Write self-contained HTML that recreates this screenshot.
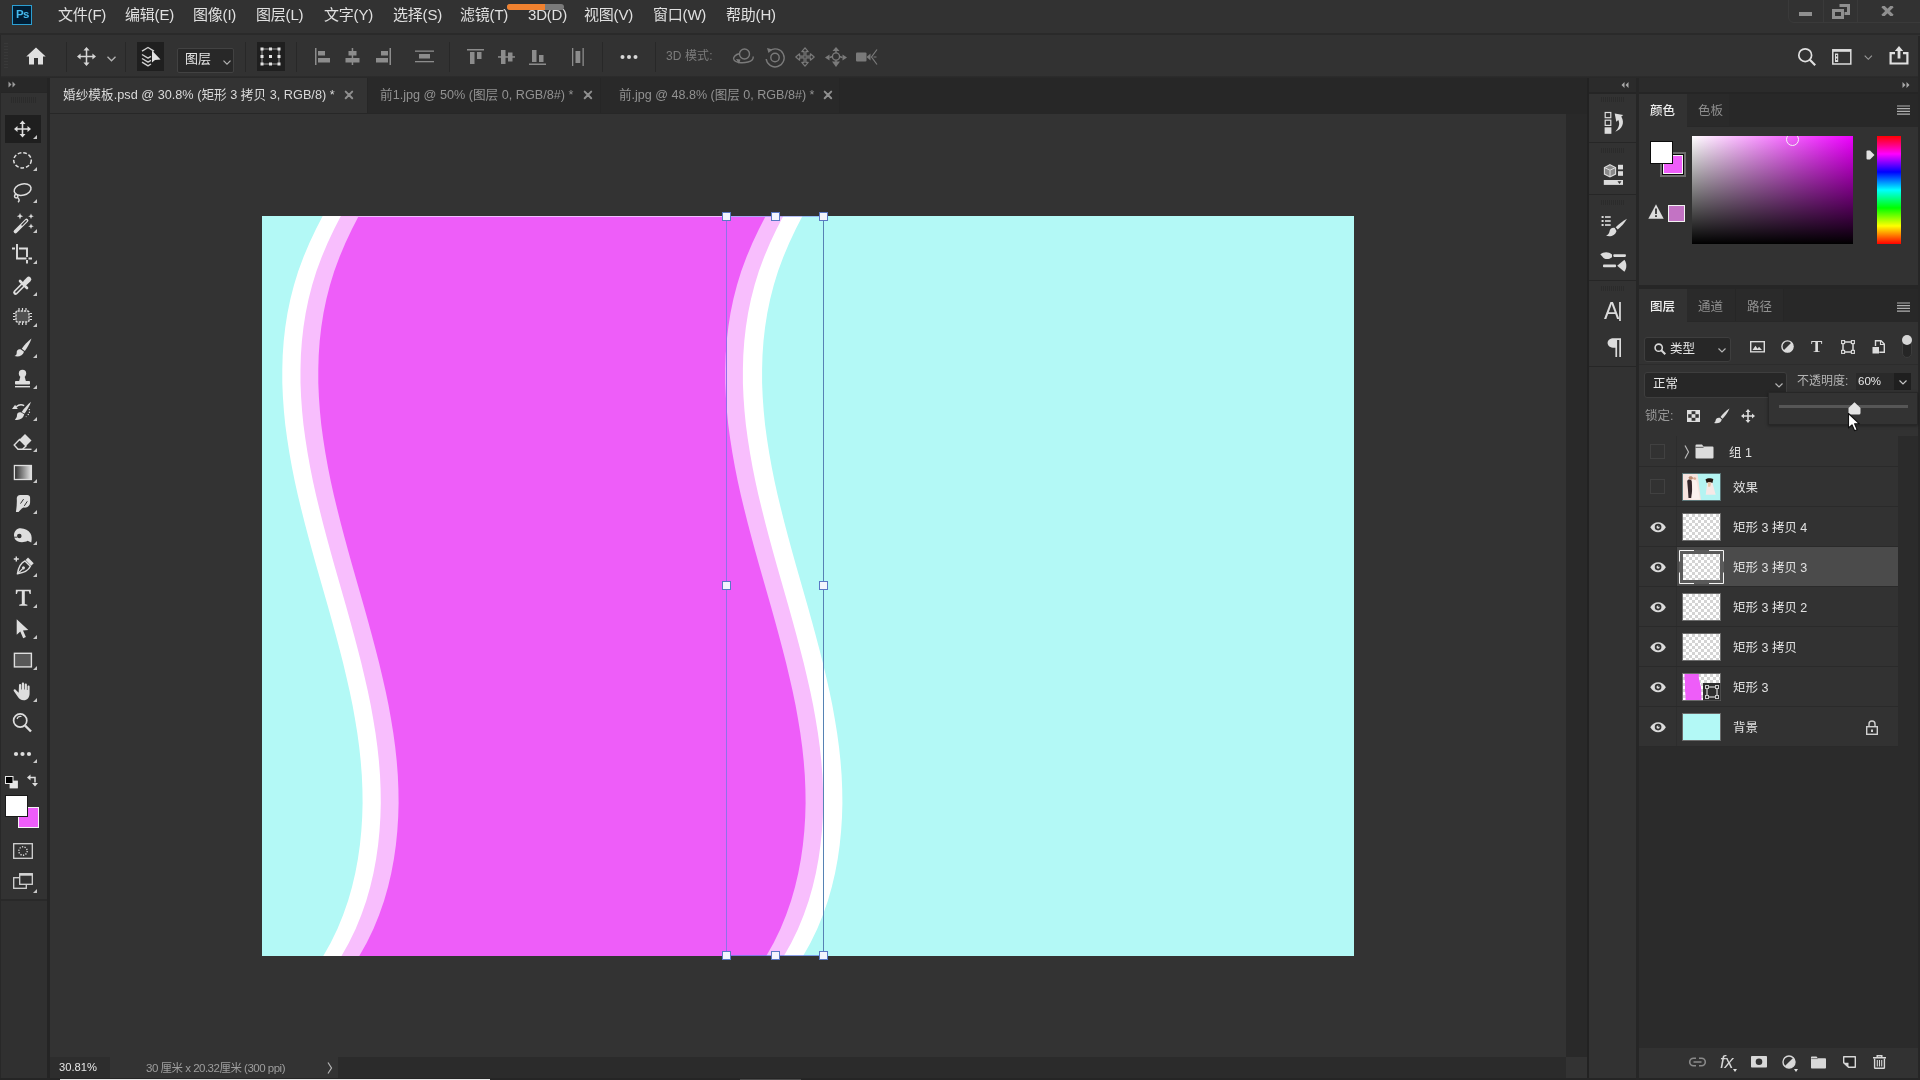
<!DOCTYPE html>
<html lang="zh-CN">
<head>
<meta charset="utf-8">
<title>婚纱模板.psd @ 30.8% (矩形 3 拷贝 3, RGB/8) *</title>
<style>
html,body{margin:0;padding:0;}
body{width:1920px;height:1080px;overflow:hidden;background:#323232;position:relative;
 font-family:"Liberation Sans","Noto Sans CJK SC",sans-serif;color:#dcdcdc;font-size:12px;}
.abs{position:absolute;display:block;}
.box{position:absolute;box-sizing:border-box;}
.t{position:absolute;white-space:nowrap;line-height:1;will-change:transform;}
svg{overflow:visible;}
.menu .t{font-size:15px;color:#e0e0e0;top:7px;letter-spacing:-0.2px;}
.tab{font-size:13px;top:89.200px;}
.ltxt{font-size:12px;color:#e2e2e2;left:1733px;}
.vsep{position:absolute;width:1px;background:#282828;top:42px;height:30px;}
.tri{position:absolute;width:0;height:0;border-left:4px solid transparent;border-bottom:4px solid #c8c8c8;}
.grip{position:absolute;height:5px;background:repeating-linear-gradient(90deg,#2b2b2b 0 1px,transparent 1px 2px);}
.rowline{position:absolute;left:1639px;width:259px;height:1px;background:#2a2a2a;}
.eye{position:absolute;left:1649.500px;width:16.200px;height:10.500px;margin-top:0.300px;}
.thumb{position:absolute;left:1682px;width:39px;height:28px;box-sizing:border-box;border:1px solid #6a6a6a;}
.chk{background-color:#fff;background-image:linear-gradient(45deg,#d4d4d4 25%,transparent 25%,transparent 75%,#d4d4d4 75%),linear-gradient(45deg,#d4d4d4 25%,transparent 25%,transparent 75%,#d4d4d4 75%);background-size:6px 6px;background-position:0 0,3px 3px;}
</style>
</head>
<body>
<!-- ===== menu bar ===== -->
<div class="box menu" style="left:0;top:0;width:1920px;height:34px;background:#323232;">
  <div class="box" style="left:12px;top:5px;width:20px;height:20px;background:#001d34;border:1.500px solid #2c9fd2;"></div>
  <div class="t" style="left:16px;top:9px;font-size:11.500px;font-weight:bold;color:#45baee;letter-spacing:-0.700px;">Ps</div>
  <div class="t" style="left:58px;">文件(F)</div>
  <div class="t" style="left:125px;">编辑(E)</div>
  <div class="t" style="left:193px;">图像(I)</div>
  <div class="t" style="left:256px;">图层(L)</div>
  <div class="t" style="left:324px;">文字(Y)</div>
  <div class="t" style="left:393px;">选择(S)</div>
  <div class="t" style="left:460px;">滤镜(T)</div>
  <div class="t" style="left:528px;">3D(D)</div>
  <div class="t" style="left:584px;">视图(V)</div>
  <div class="t" style="left:653px;">窗口(W)</div>
  <div class="t" style="left:726px;">帮助(H)</div>
  <!-- progress pill -->
  <div class="box" style="left:507px;top:4px;width:57px;height:6px;border-radius:3px;background:#7a7a7a;overflow:hidden;"><div style="width:38px;height:6px;background:#f0812f;"></div></div>
  <!-- window controls -->
  <div class="box" style="left:1788px;top:-6px;width:140px;height:29px;border:1px solid #3a3a3a;border-radius:6px;"></div>
  <div class="box" style="left:1823px;top:0;width:1px;height:22px;background:#3a3a3a;"></div>
  <div class="box" style="left:1857px;top:0;width:1px;height:22px;background:#3a3a3a;"></div>
  <div class="box" style="left:1799px;top:12px;width:13px;height:4px;background:#8f8f8f;"></div>
  <svg class="abs" style="left:1832px;top:4px" width="18" height="15" viewBox="0 0 18 15"><path d="M7.5 1.5h9v8h-4" fill="none" stroke="#8f8f8f" stroke-width="3"/><rect x="1.5" y="6.5" width="9" height="7" fill="none" stroke="#8f8f8f" stroke-width="3"/></svg>
  <svg class="abs" style="left:1881px;top:6px;overflow:hidden" width="13" height="10" viewBox="0 0 13 10"><path d="M1.5 0l10 10M11.500 0l-10 10" fill="none" stroke="#8f8f8f" stroke-width="3.2"/></svg>
</div>
<div class="box" style="left:0;top:33px;width:1920px;height:2px;background:#2a2a2a;"></div>
<!-- ===== options bar ===== -->
<div class="box" style="left:0;top:35px;width:1920px;height:41px;background:#323232;"></div>
<div class="box" style="left:0;top:76px;width:1920px;height:2px;background:linear-gradient(#2d2d2d,#282828);"></div>
<div class="box" style="left:0;top:35px;width:1px;height:43px;background:#282828;"></div>
<div class="box" style="left:4px;top:43px;width:4px;height:26px;background:repeating-linear-gradient(180deg,#393939 0 1px,transparent 1px 3px);"></div>
<!-- home -->
<svg class="abs" style="left:26px;top:47px" width="20" height="18" viewBox="0 0 20 18"><path d="M10 0.500L0.300 9.600h2.700V17.500h5V11h4v6.500h5V9.600h2.700z" fill="#e0e0e0"/></svg>
<div class="vsep" style="left:66px;"></div>
<!-- move tool preset -->
<svg class="abs" style="left:76.500px;top:47px" width="19" height="19" viewBox="0 0 20 20"><path d="M10 0l3.200 3.800h-2.400v5.400h5.400V6.800L20 10l-3.800 3.200v-2.400h-5.400v5.400h2.400L10 20l-3.200-3.800h2.400v-5.400H3.800v2.400L0 10l3.800-3.200v2.400h5.400V3.800H6.800z" fill="#d6d6d6"/></svg>
<svg class="abs" style="left:107px;top:56px" width="9" height="6" viewBox="0 0 9 6"><path d="M0.500 0.800l4 4 4-4" fill="none" stroke="#b4b4b4" stroke-width="1.300"/></svg>
<div class="vsep" style="left:125px;"></div>
<!-- auto select -->
<div class="box" style="left:137px;top:42px;width:27px;height:29px;background:#1f1f1f;"></div>
<svg class="abs" style="left:140px;top:46px" width="21" height="21" viewBox="0 0 21 21"><g fill="none" stroke="#cfcfcf" stroke-width="1.400" stroke-linejoin="round"><path d="M2 5.200L8 1.500l6 3.700"/><path d="M2 8.500l6 3.600 3-1.800"/><path d="M2 12.500l6 3.600 3-1.800"/><path d="M2 16.200l6 3.600 3-1.800"/></g><path d="M12 4.500v12l3-2.600 5.500-.4z" fill="#e2e2e2"/></svg>
<div class="box" style="left:176.500px;top:47.500px;width:57.500px;height:25.500px;background:#282828;border:1px solid #424242;border-radius:2px;"></div>
<div class="t" style="left:185px;top:52px;font-size:13px;color:#e6e6e6;">图层</div>
<svg class="abs" style="left:222.500px;top:59.500px" width="8" height="5" viewBox="0 0 8 5"><path d="M0.500 0.600l3.500 3.500 3.500-3.500" fill="none" stroke="#b4b4b4" stroke-width="1.200"/></svg>
<div class="vsep" style="left:245px;"></div>
<!-- show transform controls -->
<div class="box" style="left:257px;top:42px;width:28px;height:29px;background:#1f1f1f;"></div>
<svg class="abs" style="left:260px;top:47px" width="21" height="19" viewBox="0 0 21 19"><rect x="2" y="2" width="17" height="15" fill="none" stroke="#9a9a9a" stroke-width="1"/><g fill="#e4e4e4"><rect x="0.500" y="0.500" width="3" height="3"/><rect x="9" y="0.500" width="3" height="3"/><rect x="17.500" y="0.500" width="3" height="3"/><rect x="0.500" y="8" width="3" height="3"/><rect x="9" y="8" width="3" height="3"/><rect x="17.500" y="8" width="3" height="3"/><rect x="0.500" y="15.500" width="3" height="3"/><rect x="9" y="15.500" width="3" height="3"/><rect x="17.500" y="15.500" width="3" height="3"/></g></svg>
<div class="vsep" style="left:296px;"></div>
<!-- align icons (disabled grey) -->
<svg class="abs" style="left:315px;top:48px" width="16" height="17" viewBox="0 0 16 17"><g fill="#8c8c8c"><rect x="0" y="0" width="1.500" height="17"/><rect x="3" y="3" width="7" height="4.500"/><rect x="3" y="10" width="12" height="4.500"/></g></svg>
<svg class="abs" style="left:345px;top:48px" width="15" height="17" viewBox="0 0 15 17"><g fill="#8c8c8c"><rect x="6.700" y="0" width="1.500" height="17"/><rect x="3.500" y="3" width="8" height="4.500"/><rect x="0.500" y="10" width="14" height="4.500"/></g></svg>
<svg class="abs" style="left:375px;top:48px" width="16" height="17" viewBox="0 0 16 17"><g fill="#8c8c8c"><rect x="14.500" y="0" width="1.500" height="17"/><rect x="6" y="3" width="7" height="4.500"/><rect x="1" y="10" width="12" height="4.500"/></g></svg>
<svg class="abs" style="left:415px;top:50px" width="19" height="13" viewBox="0 0 19 13"><g fill="#8c8c8c"><rect x="0" y="0.500" width="19" height="1.300"/><rect x="0" y="11" width="19" height="1.300"/><rect x="4" y="4" width="11" height="4.500"/></g></svg>
<div class="vsep" style="left:449px;"></div>
<svg class="abs" style="left:467px;top:49px" width="17" height="16" viewBox="0 0 17 16"><g fill="#8c8c8c"><rect x="0" y="0" width="17" height="1.500"/><rect x="3" y="3" width="4.500" height="12"/><rect x="10" y="3" width="4.500" height="7"/></g></svg>
<svg class="abs" style="left:498px;top:49px" width="17" height="16" viewBox="0 0 17 16"><g fill="#8c8c8c"><rect x="0" y="7.200" width="17" height="1.500"/><rect x="3" y="1" width="4.500" height="14"/><rect x="10" y="3.500" width="4.500" height="9"/></g></svg>
<svg class="abs" style="left:529px;top:49px" width="17" height="16" viewBox="0 0 17 16"><g fill="#8c8c8c"><rect x="0" y="14.500" width="17" height="1.500"/><rect x="3" y="1" width="4.500" height="12"/><rect x="10" y="6" width="4.500" height="7"/></g></svg>
<svg class="abs" style="left:572px;top:48px" width="12" height="18" viewBox="0 0 12 18"><g fill="#8c8c8c"><rect x="0" y="0" width="1.300" height="18"/><rect x="10.500" y="0" width="1.300" height="18"/><rect x="3.500" y="3" width="4.800" height="12"/></g></svg>
<div class="vsep" style="left:602px;"></div>
<svg class="abs" style="left:620px;top:54px" width="18" height="6" viewBox="0 0 18 6"><g fill="#d8d8d8"><circle cx="2.500" cy="3" r="2"/><circle cx="9" cy="3" r="2"/><circle cx="15.500" cy="3" r="2"/></g></svg>
<div class="vsep" style="left:655px;"></div>
<div class="t" style="left:666px;top:50px;font-size:12px;color:#7c7c7c;letter-spacing:0.100px;">3D 模式:</div>
<!-- 3D mode icons (disabled) -->
<svg class="abs" style="left:732px;top:48px" width="23" height="18" viewBox="0 0 23 18"><g fill="none" stroke="#7a7a7a" stroke-width="1.400"><circle cx="12.500" cy="6" r="5"/><path d="M8 5.500C3 6.500 0.500 9.500 2 12c1.500 2.500 8 3.500 14 2 4-1 6-3.200 5-5.500"/></g><path d="M4 11l4.500 0.500-1.500 4.500z" fill="#7a7a7a"/></svg>
<svg class="abs" style="left:765px;top:47px" width="20" height="20" viewBox="0 0 20 20"><g fill="none" stroke="#7a7a7a" stroke-width="1.400"><circle cx="10" cy="10.500" r="4.200"/><path d="M5 3.500A9 9 0 1 1 1.200 12"/></g><path d="M2 1l5.500 1.500-4 3.500z" fill="#7a7a7a"/></svg>
<svg class="abs" style="left:795px;top:47px" width="20" height="20" viewBox="0 0 20 20"><path d="M10 0.800l3.200 3.800h-2.300v4.500h4.500V6.800L19.200 10l-3.800 3.200v-2.300h-4.500v4.500h2.300L10 19.200l-3.200-3.800h2.300v-4.500H4.600v2.300L0.800 10l3.800-3.200v2.300h4.500V4.600H6.800z" fill="none" stroke="#7a7a7a" stroke-width="1.200" stroke-linejoin="round"/></svg>
<svg class="abs" style="left:825px;top:47px" width="22" height="20" viewBox="0 0 22 20"><g fill="#7a7a7a"><path d="M11 0l3.500 4h-7z"/><path d="M11 20l-4-5.500h8z"/><path d="M0 10.500l4.500-3v6z"/><path d="M22 10.500l-4.500-3v6z"/></g><circle cx="11" cy="9.500" r="3.600" fill="none" stroke="#7a7a7a" stroke-width="1.400"/><path d="M11 4v2M11 13v2M4.500 10.500l3-1M17.500 10.500l-3-1" stroke="#7a7a7a" stroke-width="1.400"/></svg>
<svg class="abs" style="left:856px;top:49px" width="22" height="16" viewBox="0 0 22 16"><rect x="0" y="3.500" width="10.500" height="9" rx="1" fill="#7a7a7a"/><path d="M10.500 8l4-3.500v7z" fill="#7a7a7a"/><path d="M21 0.500L15.500 8l5.500 7.500M17.500 8h3" fill="none" stroke="#7a7a7a" stroke-width="1.200"/></svg>
<!-- right side: search / workspace / share -->
<svg class="abs" style="left:1797px;top:47px" width="20" height="20" viewBox="0 0 20 20"><circle cx="8.200" cy="8.200" r="6.400" fill="none" stroke="#e0e0e0" stroke-width="1.700"/><path d="M12.800 12.800l5.400 5.400" stroke="#e0e0e0" stroke-width="2.200"/></svg>
<svg class="abs" style="left:1832px;top:49px" width="20" height="16" viewBox="0 0 20 16"><rect x="0.800" y="0.800" width="18" height="14.200" fill="none" stroke="#dcdcdc" stroke-width="1.500"/><rect x="0.800" y="0.800" width="18" height="2" fill="#dcdcdc"/><rect x="3" y="4.500" width="3.200" height="8.500" fill="#dcdcdc"/><rect x="4" y="6" width="1.200" height="1.500" fill="#323232"/><rect x="4" y="9.500" width="1.200" height="1.500" fill="#323232"/></svg>
<svg class="abs" style="left:1864px;top:55px" width="9" height="6" viewBox="0 0 9 6"><path d="M0.700 0.700l3.600 3.600 3.600-3.600" fill="none" stroke="#9c9c9c" stroke-width="1.100"/></svg>
<svg class="abs" style="left:1889px;top:46px" width="20" height="19" viewBox="0 0 20 19"><path d="M6 7.200H1.600v10.300h16.800V7.200H14" fill="none" stroke="#e0e0e0" stroke-width="2.200"/><path d="M10 0l4.200 5h-2.800v7.500h-2.800V5H5.800z" fill="#e0e0e0"/></svg>
<!-- ===== left toolbar ===== -->
<div class="box" style="left:0;top:78px;width:47px;height:1002px;background:#303030;"></div>
<div class="box" style="left:0;top:78px;width:47px;height:822px;background:#323232;"></div>
<div class="box" style="left:0;top:78px;width:47px;height:14px;background:#282828;"></div>
<div class="box" style="left:0;top:92px;width:47px;height:1px;background:#262626;"></div>
<div class="box" style="left:0;top:899px;width:47px;height:2px;background:#292929;"></div>
<div class="box" style="left:47px;top:78px;width:3px;height:1002px;background:#242424;"></div>
<div class="box" style="left:0;top:78px;width:1px;height:1002px;background:#282828;"></div>
<svg class="abs" style="left:8px;top:81px" width="8" height="7" viewBox="0 0 8 7"><path d="M0.500 0.500l3 3-3 3zM4.500 0.500l3 3-3 3z" fill="#9c9c9c"/></svg>
<div class="grip" style="left:11px;top:97px;width:25px;height:6px;"></div>
<div class="box" style="left:5px;top:115px;width:36px;height:28px;background:#1f1f1f;"></div>
<svg class="abs" style="left:0;top:78px" width="48" height="822" viewBox="0 78 48 822">
<g fill="#dedede">
 <!-- 1 move -->
 <path transform="translate(22.500 129)" d="M0 -8.500l3 3.500h-2.200v4.200h4.200v-2.200l3.500 3-3.500 3v-2.200h-4.200v4.200h2.200l-3 3.500-3-3.500h2.200v-4.200h-4.200v2.200l-3.500-3 3.500-3v2.200h4.200v-4.200h-2.200z"/>
 <!-- 2 elliptical marquee -->
 <ellipse cx="22.500" cy="160.300" rx="8.800" ry="7.600" fill="none" stroke="#dedede" stroke-width="1.500" stroke-dasharray="3.700 1.900"/>
 <!-- 3 lasso -->
 <g transform="translate(22.500 192.500)" fill="none" stroke="#dedede" stroke-width="1.500"><ellipse cx="0.800" cy="-2.800" rx="8.600" ry="5.600" transform="rotate(-14)"/><circle cx="-6.300" cy="3.800" r="1.700"/><path d="M-5 5c2.200 1.500 2 3.500 0.500 4.800"/></g>
 <!-- 4 magic wand -->
 <g transform="translate(23.500 223)"><path d="M-8 8.500L3 -2.500" stroke="#dedede" stroke-width="3.800" stroke-linecap="round"/><path d="M-1.500 2L2.700 -2.200" stroke="#323232" stroke-width="1.400" stroke-linecap="round"/><path d="M-3.500 -10l0.900 2.300 2.300 0.900-2.300 0.900-0.900 2.300-0.900-2.300-2.300-0.900 2.300-0.900z"/><path d="M7.500 -9.500l0.800 2 2 0.800-2 0.800-0.800 2-0.800-2-2-0.800 2-0.800z"/><path d="M7.500 0.500l0.800 2 2 0.800-2 0.800-0.800 2-0.800-2-2-0.800 2-0.800z"/></g>
 <!-- 5 crop -->
 <g transform="translate(22 253.500)" fill="none" stroke="#dedede" stroke-width="1.900"><path d="M-5 -9.500v14.500h9.500M6.500 5h3.500"/><path d="M-10 -5h3M-3 -5h8v8.500M5 6.500v3.500"/></g>
 <!-- 6 eyedropper -->
 <g transform="translate(22.500 285.500)"><path d="M-7 7L1 -1" stroke="#dedede" stroke-width="4.600" stroke-linecap="round"/><path d="M-6.500 6.500L0.500 -0.500" stroke="#323232" stroke-width="1.700" stroke-linecap="round"/><path d="M-2.500 -4.500l7 7" stroke="#dedede" stroke-width="2.600" stroke-linecap="round"/><path d="M3 -3l3.200-3.200" stroke="#dedede" stroke-width="5.200" stroke-linecap="round"/></g>
 <!-- 7 patch -->
 <g transform="translate(22.500 316.500)"><rect x="-6.500" y="-5.500" width="13" height="11" rx="1.500" fill="#505050" stroke="#dedede" stroke-width="1.400" stroke-dasharray="2.200 1"/><path d="M-3.500 -6v-2.600M0 -6v-2.600M3.500 -6v-2.600M-3.500 6v2.600M0 6v2.600M3.500 6v2.600M-7 -3h-2.500M-7 0h-2.500M-7 3h-2.500M7 -3h2.500M7 0h2.500M7 3h2.500" stroke="#dedede" stroke-width="1.200"/></g>
 <!-- 8 brush -->
 <g transform="translate(23 347.500)"><path d="M8.500 -9C5 -6.500 1 -2 -1.200 1.200L1.800 3.600C4 0.500 7 -4.500 8.500 -9z"/><path d="M-2 2C-4.500 1 -6.500 2.800 -6.300 5.200C-6.200 7 -7.300 8 -8.500 8.600C-4.500 9.800 0 8.300 1 4.300z"/></g>
 <!-- 9 stamp -->
 <g transform="translate(22.500 378.500)"><circle cx="0" cy="-5" r="3.700"/><path d="M-2 -2.500h4l1.500 5.500h-7z"/><rect x="-7.500" y="2.500" width="15" height="3.600" rx="0.800"/><rect x="-7.500" y="7.500" width="15" height="1.400"/></g>
 <!-- 10 history brush -->
 <g transform="translate(22 411)"><path d="M9 -9.300C5.500 -6.500 2 -2.500 -0.300 1L2.600 2.500C5 -1 7.800 -5.500 9 -9.300z"/><path d="M-0.800 1.600C-3.200 0.800 -5 2.200 -5 4.300C-5 6.300 -6 7.800 -7.200 8.700C-3 9.500 1.200 8 2.200 3.300z"/><path d="M-5.800 -4.200C-3.500 -6.300 -0.500 -6.800 2.200 -5.400" fill="none" stroke="#dedede" stroke-width="1.300"/><path d="M-10 -2h5.800l-2.700-4.300z"/><circle cx="7.400" cy="-1.400" r="0.700"/><circle cx="7.400" cy="1.300" r="0.700"/><circle cx="6.300" cy="3.500" r="0.700"/><circle cx="4.200" cy="5.600" r="0.700" fill="#9a9a9a"/></g>
 <!-- 11 eraser -->
 <g transform="translate(22.500 442)"><path d="M2.500 -8L9 -1.500L3.500 4L-3 -2.500z"/><path d="M-3 -2.500L3.500 4L0 7.300h-4.500L-8.300 3z" fill="none" stroke="#dedede" stroke-width="1.400"/><path d="M0 7.300h9" stroke="#dedede" stroke-width="1.400"/></g>
 <!-- 12 gradient -->
 <rect x="14.400" y="465.500" width="17" height="14" fill="url(#gradtool)" stroke="#dedede" stroke-width="1.300"/>
 <!-- 13 smudge -->
 <g transform="translate(23.300 503.300)"><path d="M-7.400 8.600L-4.800 8.600C-3 6.500 -1.500 5 0.200 4.200C4 5 6.800 2.500 6.800 -1V-5.500C6.800 -7.500 5.500 -8.300 4 -8.300H-3C-5.500 -8.300 -6.800 -6.500 -6.500 -4C-6.300 0 -6.800 5 -7.400 8.600z"/><path d="M-2.800 0.300L0.300 -4.200M1 2.600L4 -2" fill="none" stroke="#323232" stroke-width="1"/></g>
 <!-- 14 sponge / burn hand -->
 <g transform="translate(23 535)"><path d="M-9 0.500C-9 -4 -6 -6.700 -2.500 -6.700C2 -6.700 5.500 -4.500 7.500 -1.500C8.800 0.500 9 4 8.300 7.400L4.500 5.800C2 7.500 -2.500 7.600 -5 6.500C-7.500 5.500 -9 3.500 -9 0.500z"/><circle cx="-3.700" cy="1" r="2.300" fill="#323232"/><path d="M-9.500 2.200h3.500" stroke="#323232" stroke-width="0.900"/></g>
 <!-- 15 pen + -->
 <g transform="translate(22.300 566.500)"><path d="M-8.500 -7.500h5M-6 -10v5" stroke="#dedede" stroke-width="1.400"/><g transform="rotate(45 1.500 1)"><path d="M-2.500 -9h8v3.500h-8z"/><path d="M-2.300 -4.500h7.600C7 0 5.500 4.500 1.500 10C-2.500 4.500 -4 0 -2.300 -4.500z" fill="none" stroke="#dedede" stroke-width="1.500" stroke-linejoin="round"/><path d="M1.500 9.500v-7" stroke="#dedede" stroke-width="1.200"/><circle cx="1.500" cy="1.500" r="1.500"/></g></g>
 <!-- 16 type -->
 <path transform="translate(23.300 597.700)" d="M-7.500 -8h15v4.200h-1.100l-0.900-2.600h-4v12.800l2.600 0.600v1h-8.200v-1l2.600-0.600v-12.800h-4l-0.900 2.600h-1.100z"/>
 <!-- 17 path selection -->
 <path transform="translate(22.500 628.700)" d="M-5.800 -9.500v15.500l3.600-3.300 2.900 6.800 2.700-1.200-2.900-6.600 5.300-0.300z"/>
 <!-- 18 rectangle -->
 <rect x="14.400" y="653.300" width="17" height="13.600" fill="#585858" stroke="#dedede" stroke-width="1.400"/>
 <!-- 19 hand -->
 <path transform="translate(22.500 691.500)" d="M-3.500 -6.500c0-1.500 2.200-1.500 2.200 0v4.500h0.600v-6c0-1.500 2.300-1.500 2.300 0v6h0.600v-5c0-1.500 2.200-1.500 2.200 0v5.500h0.600v-3.500c0-1.400 2.100-1.400 2.100 0v7c0 4-2.500 6.800-5.800 6.800c-3 0-4.500-1.300-6-3.500l-4-5.800c-0.800-1.200 0.800-2.300 1.800-1.300l3.100 3.100z"/>
 <!-- 20 zoom -->
 <g transform="translate(22.500 722.500)" fill="none" stroke="#dedede"><circle cx="-2.300" cy="-2" r="6.600" stroke-width="1.700"/><path d="M2.500 3l6 6" stroke-width="2.400"/><path d="M-5.500 -3.500A3.800 3.800 0 0 1 -1 -6" stroke-width="1.100"/></g>
 <!-- 21 more -->
 <circle cx="16" cy="754" r="2.100"/><circle cx="22.500" cy="754" r="2.100"/><circle cx="29" cy="754" r="2.100"/>
 <!-- default colours / swap -->
 <rect x="10" y="781" width="7.500" height="7" fill="#e6e6e6" stroke="#e6e6e6" stroke-width="0.800"/>
 <rect x="5.500" y="776.500" width="7.500" height="7" fill="#000" stroke="#e6e6e6" stroke-width="1"/>
 <g transform="translate(33 781)"><path d="M-3.500 -3.500h5.500v5" fill="none" stroke="#dedede" stroke-width="1.500"/><path d="M-6 -3.500l3.500-3v6z"/><path d="M2 5.500l-3-3.500h6z"/></g>
</g>
<defs><linearGradient id="gradtool" x1="0" x2="1" y1="0" y2="0"><stop offset="0" stop-color="#2c2c2c"/><stop offset="1" stop-color="#e4e4e4"/></linearGradient></defs>
</svg>
<!-- flyout triangles -->
<div class="tri" style="left:33px;top:135.3px"></div><div class="tri" style="left:33px;top:166.6px"></div><div class="tri" style="left:33px;top:198.8px"></div><div class="tri" style="left:33px;top:229.3px"></div><div class="tri" style="left:33px;top:259.8px"></div><div class="tri" style="left:33px;top:291.8px"></div><div class="tri" style="left:33px;top:322.8px"></div><div class="tri" style="left:33px;top:353.8px"></div><div class="tri" style="left:33px;top:384.8px"></div><div class="tri" style="left:33px;top:417.3px"></div><div class="tri" style="left:33px;top:448.3px"></div><div class="tri" style="left:33px;top:478.7px"></div><div class="tri" style="left:33px;top:509.6px"></div><div class="tri" style="left:33px;top:541.3px"></div><div class="tri" style="left:33px;top:572.8px"></div><div class="tri" style="left:33px;top:604.0px"></div><div class="tri" style="left:33px;top:635.0px"></div><div class="tri" style="left:33px;top:666.3px"></div><div class="tri" style="left:33px;top:697.8px"></div><div class="tri" style="left:33px;top:759px"></div><div class="tri" style="left:33px;top:889px"></div>
<!-- fg / bg swatches -->
<div class="box" style="left:18px;top:807px;width:21px;height:21px;background:#ee5df9;border:1px solid #f4f4f4;"></div>
<div class="box" style="left:5px;top:795px;width:23px;height:22px;background:#ffffff;border:1px solid #1a1a1a;"></div>
<!-- quick mask / screen mode -->
<svg class="abs" style="left:13px;top:843px" width="20" height="16" viewBox="0 0 20 16"><rect x="0.700" y="0.700" width="18.600" height="14.600" fill="none" stroke="#d4d4d4" stroke-width="1.300"/><circle cx="10" cy="8" r="4.200" fill="none" stroke="#d4d4d4" stroke-width="1.400" stroke-dasharray="1.300 1.300"/></svg>
<svg class="abs" style="left:13px;top:873px" width="20" height="16" viewBox="0 0 20 16"><rect x="0.700" y="4.700" width="12.600" height="10.600" fill="#323232" stroke="#d4d4d4" stroke-width="1.300"/><rect x="6.700" y="0.700" width="12.600" height="10.600" fill="#323232" stroke="#d4d4d4" stroke-width="1.300"/><rect x="6.700" y="0.700" width="12.600" height="2" fill="#d4d4d4"/></svg>
<!-- ===== document window ===== -->
<div class="box" style="left:50px;top:78px;width:1537px;height:36px;background:#272727;"></div>
<div class="box" style="left:50px;top:78px;width:317px;height:36px;background:#333333;"></div>
<div class="box" style="left:367px;top:78px;width:473px;height:35px;background:#292929;"></div>
<div class="box" style="left:367px;top:78px;width:1px;height:35px;background:#262626;"></div>
<div class="box" style="left:600px;top:78px;width:1px;height:35px;background:#262626;"></div>
<div class="box" style="left:839px;top:78px;width:1px;height:35px;background:#262626;"></div>
<div class="box" style="left:50px;top:113px;width:1537px;height:1px;background:#272727;"></div>
<div class="t tab" style="left:63px;color:#dadada;font-size:12.700px;">婚纱模板.psd @ 30.8% (矩形 3 拷贝 3, RGB/8) *</div>
<svg class="abs" style="left:344px;top:90px" width="10" height="10" viewBox="0 0 10 10"><path d="M1.700 1.600l6.500 6.600M8.200 1.600l-6.500 6.600" stroke="#8e8e8e" stroke-width="2" stroke-linecap="round"/></svg>
<div class="t tab" style="left:380px;color:#929292;font-size:12.650px;">前1.jpg @ 50% (图层 0, RGB/8#) *</div>
<svg class="abs" style="left:583px;top:90px" width="10" height="10" viewBox="0 0 10 10"><path d="M1.700 1.600l6.500 6.600M8.200 1.600l-6.500 6.600" stroke="#8e8e8e" stroke-width="2" stroke-linecap="round"/></svg>
<div class="t tab" style="left:619px;color:#929292;font-size:12.550px;">前.jpg @ 48.8% (图层 0, RGB/8#) *</div>
<svg class="abs" style="left:823px;top:90px" width="10" height="10" viewBox="0 0 10 10"><path d="M1.700 1.600l6.500 6.600M8.200 1.600l-6.500 6.600" stroke="#8e8e8e" stroke-width="2" stroke-linecap="round"/></svg>
<!-- pasteboard -->
<div class="box" style="left:50px;top:114px;width:1516px;height:943px;background:#333333;"></div>
<!-- scrollbars -->
<div class="box" style="left:1566px;top:114px;width:21px;height:943px;background:#292929;"></div>
<div class="box" style="left:50px;top:1057px;width:1516px;height:21px;background:#2b2b2b;"></div>
<div class="box" style="left:1566px;top:1057px;width:21px;height:21px;background:#333333;"></div>
<div class="box" style="left:1587px;top:78px;width:2px;height:1002px;background:#222222;"></div>
<!-- status bar -->
<div class="box" style="left:50px;top:1057px;width:60px;height:21px;background:#2d2d2d;"></div>
<div class="box" style="left:110px;top:1057px;width:228px;height:21px;background:#333333;"></div>
<div class="t" style="left:59px;top:1062px;font-size:11.200px;color:#e6e6e6;">30.81%</div>
<div class="t" style="left:146px;top:1063px;font-size:11.500px;color:#9e9e9e;letter-spacing:-0.500px;">30 厘米 x 20.32厘米 (300 ppi)</div>
<svg class="abs" style="left:327px;top:1062px" width="6" height="12" viewBox="0 0 6 12"><path d="M1 0.500l3.500 5.500L1 11.500" fill="none" stroke="#b4b4b4" stroke-width="1.200"/></svg>
<div class="box" style="left:0;top:1078px;width:1920px;height:2px;background:#252525;"></div>
<div class="box" style="left:60px;top:1079px;width:430px;height:1px;background:#e8e8e8;"></div>
<div class="box" style="left:740px;top:1079px;width:61px;height:1px;background:#4c4c4c;"></div>
<!-- canvas artwork -->
<svg class="abs" style="left:262px;top:216px;overflow:hidden" width="1092" height="740" viewBox="262 216 1092 740">
<rect x="262" y="216" width="1092" height="740" fill="#b3f9f6"/>
<polygon fill="#ffffff" points="323.2,215.0 316.0,229.0 309.4,243.0 303.5,257.0 298.3,271.0 294.0,285.0 290.4,299.0 287.5,313.0 285.3,327.0 283.7,341.0 282.7,355.0 282.3,369.0 282.3,383.0 282.9,397.0 283.9,411.0 285.3,425.0 287.2,439.0 289.4,453.0 291.9,467.0 294.7,481.0 297.8,495.0 301.2,509.0 304.7,523.0 308.4,537.0 312.2,551.0 316.1,565.0 320.1,579.0 324.1,593.0 328.1,607.0 332.0,621.0 335.8,635.0 339.5,649.0 343.1,663.0 346.4,677.0 349.6,691.0 352.5,705.0 355.0,719.0 357.3,733.0 359.2,747.0 360.7,761.0 361.8,775.0 362.4,789.0 362.6,803.0 362.2,817.0 361.3,831.0 359.9,845.0 357.9,859.0 355.3,873.0 352.0,887.0 348.0,901.0 343.1,915.0 337.4,929.0 330.6,943.0 322.7,957.0 802.5,957.0 810.4,943.0 817.2,929.0 822.9,915.0 827.8,901.0 831.8,887.0 835.1,873.0 837.7,859.0 839.7,845.0 841.1,831.0 842.0,817.0 842.4,803.0 842.2,789.0 841.6,775.0 840.5,761.0 839.0,747.0 837.1,733.0 834.8,719.0 832.3,705.0 829.4,691.0 826.2,677.0 822.9,663.0 819.3,649.0 815.6,635.0 811.8,621.0 807.9,607.0 803.9,593.0 799.9,579.0 795.9,565.0 792.0,551.0 788.2,537.0 784.5,523.0 781.0,509.0 777.6,495.0 774.5,481.0 771.7,467.0 769.2,453.0 767.0,439.0 765.1,425.0 763.7,411.0 762.7,397.0 762.1,383.0 762.1,369.0 762.5,355.0 763.5,341.0 765.1,327.0 767.3,313.0 770.2,299.0 773.8,285.0 778.1,271.0 783.3,257.0 789.2,243.0 795.8,229.0 803.0,215.0"/>
<polygon fill="#f8befd" points="341.4,215.0 334.2,229.0 327.6,243.0 321.7,257.0 316.5,271.0 312.2,285.0 308.6,299.0 305.7,313.0 303.5,327.0 301.9,341.0 300.9,355.0 300.5,369.0 300.5,383.0 301.1,397.0 302.1,411.0 303.5,425.0 305.4,439.0 307.6,453.0 310.1,467.0 312.9,481.0 316.0,495.0 319.4,509.0 322.9,523.0 326.6,537.0 330.4,551.0 334.3,565.0 338.3,579.0 342.3,593.0 346.3,607.0 350.2,621.0 354.0,635.0 357.7,649.0 361.3,663.0 364.6,677.0 367.8,691.0 370.7,705.0 373.2,719.0 375.5,733.0 377.4,747.0 378.9,761.0 380.0,775.0 380.6,789.0 380.8,803.0 380.4,817.0 379.5,831.0 378.1,845.0 376.1,859.0 373.5,873.0 370.2,887.0 366.2,901.0 361.3,915.0 355.6,929.0 348.8,943.0 340.9,957.0 783.3,957.0 791.2,943.0 798.0,929.0 803.7,915.0 808.6,901.0 812.6,887.0 815.9,873.0 818.5,859.0 820.5,845.0 821.9,831.0 822.8,817.0 823.2,803.0 823.0,789.0 822.4,775.0 821.3,761.0 819.8,747.0 817.9,733.0 815.6,719.0 813.1,705.0 810.2,691.0 807.0,677.0 803.7,663.0 800.1,649.0 796.4,635.0 792.6,621.0 788.7,607.0 784.7,593.0 780.7,579.0 776.7,565.0 772.8,551.0 769.0,537.0 765.3,523.0 761.8,509.0 758.4,495.0 755.3,481.0 752.5,467.0 750.0,453.0 747.8,439.0 745.9,425.0 744.5,411.0 743.5,397.0 742.9,383.0 742.9,369.0 743.3,355.0 744.3,341.0 745.9,327.0 748.1,313.0 751.0,299.0 754.6,285.0 758.9,271.0 764.1,257.0 770.0,243.0 776.6,229.0 783.8,215.0"/>
<polygon fill="#ee5df9" points="359.2,215.0 352.0,229.0 345.4,243.0 339.5,257.0 334.3,271.0 330.0,285.0 326.4,299.0 323.5,313.0 321.3,327.0 319.7,341.0 318.7,355.0 318.3,369.0 318.3,383.0 318.9,397.0 319.9,411.0 321.3,425.0 323.2,439.0 325.4,453.0 327.9,467.0 330.7,481.0 333.8,495.0 337.2,509.0 340.7,523.0 344.4,537.0 348.2,551.0 352.1,565.0 356.1,579.0 360.1,593.0 364.1,607.0 368.0,621.0 371.8,635.0 375.5,649.0 379.1,663.0 382.4,677.0 385.6,691.0 388.5,705.0 391.0,719.0 393.3,733.0 395.2,747.0 396.7,761.0 397.8,775.0 398.4,789.0 398.6,803.0 398.2,817.0 397.3,831.0 395.9,845.0 393.9,859.0 391.3,873.0 388.0,887.0 384.0,901.0 379.1,915.0 373.4,929.0 366.6,943.0 358.7,957.0 765.7,957.0 773.6,943.0 780.4,929.0 786.1,915.0 791.0,901.0 795.0,887.0 798.3,873.0 800.9,859.0 802.9,845.0 804.3,831.0 805.2,817.0 805.6,803.0 805.4,789.0 804.8,775.0 803.7,761.0 802.2,747.0 800.3,733.0 798.0,719.0 795.5,705.0 792.6,691.0 789.4,677.0 786.1,663.0 782.5,649.0 778.8,635.0 775.0,621.0 771.1,607.0 767.1,593.0 763.1,579.0 759.1,565.0 755.2,551.0 751.4,537.0 747.7,523.0 744.2,509.0 740.8,495.0 737.7,481.0 734.9,467.0 732.4,453.0 730.2,439.0 728.3,425.0 726.9,411.0 725.9,397.0 725.3,383.0 725.3,369.0 725.7,355.0 726.7,341.0 728.3,327.0 730.5,313.0 733.4,299.0 737.0,285.0 741.3,271.0 746.5,257.0 752.4,243.0 759.0,229.0 766.2,215.0"/>
<rect x="356" y="216" width="410" height="1" fill="#f1bdfd"/>
</svg>
<!-- transform bounding box -->
<div class="box" style="left:726px;top:216px;width:1px;height:740px;background:#9070ea;"></div>
<div class="box" style="left:823px;top:216px;width:1px;height:740px;background:#5682b4;"></div>
<div class="box" style="left:726px;top:216px;width:98px;height:1px;background:rgba(120,140,240,0.55);"></div>
<div class="box" style="left:726px;top:955px;width:98px;height:1px;background:rgba(90,120,220,0.7);"></div>
<div class="box hd" style="left:722px;top:212px;"></div><div class="box hd" style="left:771px;top:212px;"></div><div class="box hd" style="left:819px;top:212px;"></div>
<div class="box hd" style="left:722px;top:581px;"></div><div class="box hd" style="left:819px;top:581px;"></div>
<div class="box hd" style="left:722px;top:951px;"></div><div class="box hd" style="left:771px;top:951px;"></div><div class="box hd" style="left:819px;top:951px;"></div>
<style>.hd{width:9px;height:9px;background:#f3f5fd;border:1px solid #5a78c4;}</style>
<!-- ===== collapsed panel icon strip ===== -->
<div class="box" style="left:1589px;top:78px;width:47px;height:1000px;background:#323232;"></div>
<div class="box" style="left:1589px;top:78px;width:331px;height:14px;background:#2b2b2b;"></div>
<div class="box" style="left:1589px;top:92px;width:331px;height:2px;background:#252525;"></div>
<div class="box" style="left:1636px;top:78px;width:3px;height:1002px;background:#262626;"></div>
<svg class="abs" style="left:1621px;top:82px" width="8" height="6" viewBox="0 0 8 6"><path d="M3.500 0L0.500 3l3 3zM7.500 0L4.500 3l3 3z" fill="#a8a8a8"/></svg>
<svg class="abs" style="left:1902px;top:82px" width="8" height="6" viewBox="0 0 8 6"><path d="M0.500 0l3 3-3 3zM4.500 0l3 3-3 3z" fill="#a8a8a8"/></svg>
<div class="grip" style="left:1601px;top:97px;width:24px;"></div>
<div class="grip" style="left:1601px;top:148px;width:24px;"></div>
<div class="grip" style="left:1601px;top:200px;width:24px;"></div>
<div class="grip" style="left:1601px;top:286px;width:24px;"></div>
<div class="box" style="left:1589px;top:142px;width:47px;height:1px;background:#262626;"></div>
<div class="box" style="left:1589px;top:194px;width:47px;height:1px;background:#262626;"></div>
<div class="box" style="left:1589px;top:280px;width:47px;height:1px;background:#262626;"></div>
<div class="box" style="left:1589px;top:366px;width:47px;height:1px;background:#262626;"></div>
<svg class="abs" style="left:1589px;top:94px" width="47" height="280" viewBox="1589 94 47 280">
<g fill="#dcdcdc">
 <!-- history -->
 <rect x="1605.200" y="112.500" width="5.600" height="5.200" fill="none" stroke="#dcdcdc" stroke-width="1.200"/>
 <rect x="1605.200" y="120.200" width="5.600" height="5.200" fill="none" stroke="#dcdcdc" stroke-width="1.200"/>
 <rect x="1604.600" y="127.300" width="6.800" height="6.500"/>
 <path d="M1615.300 131.800c6.800-2.800 9.800-8.800 6-15.300l2-1.600-8.600-1.300 1.600 8.200 2-1.700c2 4.200 0.400 8.200-3 11.700z"/>
 <!-- 3D -->
 <path d="M1610 164.700l5.600 2.800v6.600l-5.600 2.900-5.600-2.900v-6.600z" fill="#8a8a8a" stroke="#dcdcdc" stroke-width="1.100"/>
 <path d="M1604.400 167.500l5.600 2.700 5.600-2.700M1610 170.200v6.800" fill="none" stroke="#dcdcdc" stroke-width="1"/>
 <rect x="1618" y="164.800" width="5" height="4.600"/><rect x="1618" y="171.200" width="5" height="4.600"/>
 <rect x="1603.800" y="180" width="19.200" height="4.900"/><path d="M1617.500 181.300h4l-2 2.600z" fill="#323232"/>
 <!-- brush settings -->
 <rect x="1601.600" y="216" width="2" height="2"/><rect x="1601.600" y="220" width="2" height="2"/><rect x="1601.600" y="224" width="2" height="2"/>
 <rect x="1605" y="216.200" width="5.700" height="1.600"/><rect x="1605" y="220.200" width="5.700" height="1.600"/><rect x="1605" y="224.200" width="5.700" height="1.600"/>
 <path d="M1627 218.800c-4 2-8.500 5.500-11.300 8.500l2 2.300c3.300-2.800 7-6.700 9.300-10.800z"/>
 <path d="M1614.800 228c-2.800-0.700-5 1-5.300 3.500c-0.200 1.800-1.500 3.300-3.500 4.300c4.500 1.200 9 0.300 10.500-4.800z"/>
 <!-- brushes -->
 <path d="M1600.300 254.300c3-2.500 8-3.300 11.700 0.300v2.600c-3.700 3-8 2-9.500-0.500z"/>
 <rect x="1613.300" y="254.200" width="12.600" height="2.700" rx="0.800"/>
 <rect x="1603" y="264.400" width="13" height="2.800" rx="0.800"/>
 <path d="M1617.200 265.800l7.200-6c2.600 3.800 2.600 8.200 0 12z"/>
 <!-- paragraph mark -->
 <path d="M1613.800 338.300h7.200v18.700h-1.700v-17h-2.200v17h-1.700v-9.200c-5 0.300-7.800-2-7.800-4.800c0-2.800 2.600-4.700 6.200-4.700z"/>
</g>
</svg>
<div class="t" style="left:1604px;top:300px;font-size:23px;color:#dcdcdc;letter-spacing:-1px;">A<span style="font-size:21px;position:relative;top:-2px;left:-1px;font-weight:200;">|</span></div>
<!-- ===== colour panel ===== -->
<div class="box" style="left:1639px;top:94px;width:279px;height:191px;background:#323232;"></div>
<div class="box" style="left:1639px;top:94px;width:279px;height:33px;background:#282828;"></div>
<div class="box" style="left:1639px;top:94px;width:48px;height:33px;background:#323232;"></div>
<div class="box" style="left:1687px;top:94px;width:42px;height:32px;background:#2a2a2a;"></div>
<div class="box" style="left:1918px;top:36px;width:2px;height:1044px;background:#262626;"></div>
<div class="t" style="left:1650px;top:105px;font-size:12.500px;color:#ececec;font-weight:500;">颜色</div>
<div class="t" style="left:1698px;top:105px;font-size:12.500px;color:#8e8e8e;">色板</div>
<svg class="abs" style="left:1897px;top:105px" width="13" height="10" viewBox="0 0 13 10"><path d="M0 1h13M0 3.700h13M0 6.400h13M0 9.100h13" stroke="#b0b0b0" stroke-width="1.200"/></svg>
<!-- fg / bg -->
<div class="box" style="left:1660px;top:152px;width:26px;height:25px;background:#ee5df9;border:2px solid #6c6c6c;box-shadow:inset 0 0 0 1px #0a0a0a;"></div>
<div class="box" style="left:1663px;top:155px;width:20px;height:19px;border:1px solid #f4f4f4;"></div>
<div class="box" style="left:1650px;top:141px;width:23px;height:23px;background:#ffffff;border:1px solid #0c0c0c;"></div>
<!-- gamut warning -->
<svg class="abs" style="left:1648px;top:204px" width="16" height="15" viewBox="0 0 16 15"><path d="M8 0.300L15.700 14.700H0.300z" fill="#dcdcdc"/><rect x="7.100" y="4.500" width="1.800" height="5.500" fill="#323232"/><rect x="7.100" y="11.200" width="1.800" height="1.800" fill="#323232"/></svg>
<div class="box" style="left:1668px;top:205px;width:17px;height:17px;background:#c373c4;border:1px solid #f2f2f2;"></div>
<!-- colour field -->
<div class="box" style="left:1692px;top:136px;width:161px;height:108px;background:linear-gradient(to top,#000,rgba(0,0,0,0)),linear-gradient(to right,#fff,#ee00ff);"></div>
<div class="box" style="left:1786px;top:133px;width:13px;height:13px;border:1px solid #f4f4f4;border-radius:50%;clip-path:inset(3px 0 0 0);"></div>
<!-- hue slider -->
<div class="box" style="left:1877px;top:136px;width:24px;height:108px;background:linear-gradient(to bottom,#ff0000 0%,#ff00ff 16.600%,#0000ff 33.300%,#00ffff 50%,#00ff00 66.600%,#ffff00 83.300%,#ff0000 100%);"></div>
<svg class="abs" style="left:1866px;top:150px" width="9" height="10" viewBox="0 0 9 10"><path d="M0.500 1.500q0-1 1-1h2.500l4.500 4.500-4.500 4.500h-2.500q-1 0-1-1z" fill="#e2e2e2"/></svg>
<div class="box" style="left:1639px;top:285px;width:279px;height:4px;background:#262626;"></div>
<!-- ===== layers panel ===== -->
<div class="box" style="left:1639px;top:289px;width:279px;height:789px;background:#323232;"></div>
<div class="box" style="left:1639px;top:289px;width:279px;height:33px;background:#282828;"></div>
<div class="box" style="left:1639px;top:289px;width:48px;height:33px;background:#323232;"></div>
<div class="box" style="left:1687px;top:289px;width:96px;height:32px;background:#2a2a2a;"></div>
<div class="box" style="left:1735px;top:289px;width:1px;height:32px;background:#262626;"></div>
<div class="box" style="left:1783px;top:289px;width:1px;height:32px;background:#262626;"></div>
<div class="t" style="left:1650px;top:301px;font-size:12.500px;color:#f0f0f0;font-weight:500;">图层</div>
<div class="t" style="left:1698px;top:301px;font-size:12.500px;color:#909090;">通道</div>
<div class="t" style="left:1747px;top:301px;font-size:12.500px;color:#909090;">路径</div>
<svg class="abs" style="left:1897px;top:302px" width="13" height="10" viewBox="0 0 13 10"><path d="M0 1h13M0 3.700h13M0 6.400h13M0 9.100h13" stroke="#b0b0b0" stroke-width="1.200"/></svg>
<!-- filter row -->
<div class="box" style="left:1643.500px;top:336.500px;width:87px;height:25.500px;background:#272727;border:1px solid #3e3e3e;border-radius:3px;"></div>
<svg class="abs" style="left:1654px;top:343px" width="12" height="12" viewBox="0 0 12 12"><circle cx="4.700" cy="4.700" r="3.600" fill="none" stroke="#d8d8d8" stroke-width="1.600"/><path d="M7.300 7.300l4 4" stroke="#d8d8d8" stroke-width="2"/></svg>
<div class="t" style="left:1670px;top:343px;font-size:12.500px;color:#e6e6e6;">类型</div>
<svg class="abs" style="left:1718px;top:348px" width="8" height="5" viewBox="0 0 8 5"><path d="M0.500 0.500l3.500 3.500 3.500-3.500" fill="none" stroke="#b4b4b4" stroke-width="1.200"/></svg>
<svg class="abs" style="left:1750px;top:340.500px" width="15" height="11.500" viewBox="0 0 15 12" preserveAspectRatio="none"><rect x="0.700" y="0.700" width="13.600" height="10.600" fill="none" stroke="#dcdcdc" stroke-width="1.400"/><path d="M2.500 9.500l3-4.500 2 3 1.500-2 3 3.500z" fill="#dcdcdc"/></svg>
<svg class="abs" style="left:1781px;top:340px" width="13" height="13" viewBox="0 0 13 13"><circle cx="6.500" cy="6.500" r="5.600" fill="none" stroke="#dcdcdc" stroke-width="1.400"/><path d="M10.500 2.500A5.600 5.600 0 0 1 2.500 10.500z" fill="#dcdcdc"/></svg>
<div class="t" style="left:1811px;top:338px;font-size:17px;font-weight:bold;font-family:'Liberation Serif',serif;color:#dcdcdc;">T</div>
<svg class="abs" style="left:1841px;top:340px" width="14" height="14" viewBox="0 0 14 14"><rect x="2" y="2" width="10" height="10" fill="none" stroke="#dcdcdc" stroke-width="1.500"/><g fill="#323232" stroke="#dcdcdc" stroke-width="1.100"><rect x="0.600" y="0.600" width="3" height="3"/><rect x="10.400" y="0.600" width="3" height="3"/><rect x="0.600" y="10.400" width="3" height="3"/><rect x="10.400" y="10.400" width="3" height="3"/></g></svg>
<svg class="abs" style="left:1872px;top:340px" width="13" height="14" viewBox="0 0 13 14"><path d="M3.500 6V0.700h5.500l3.300 3.300v8.300h-5" fill="none" stroke="#dcdcdc" stroke-width="1.400"/><path d="M8.500 0.700v3.800h3.800" fill="none" stroke="#dcdcdc" stroke-width="1.100"/><rect x="0.500" y="7" width="6.500" height="6.500" fill="#dcdcdc"/></svg>
<div class="box" style="left:1902px;top:337px;width:10px;height:21px;border-radius:5px;background:#262626;border:1px solid #3c3c3c;"></div>
<div class="box" style="left:1902px;top:335px;width:10px;height:10px;border-radius:50%;background:#d6d6d6;"></div>
<div class="box" style="left:1639px;top:364px;width:279px;height:1px;background:#2c2c2c;"></div>
<!-- blend / opacity row -->
<div class="box" style="left:1644px;top:372px;width:143px;height:26px;background:#272727;border:1px solid #3e3e3e;border-radius:3px;"></div>
<div class="t" style="left:1653px;top:378px;font-size:12.500px;color:#e8e8e8;">正常</div>
<svg class="abs" style="left:1775px;top:383px" width="8" height="5" viewBox="0 0 8 5"><path d="M0.500 0.500l3.500 3.500 3.500-3.500" fill="none" stroke="#b4b4b4" stroke-width="1.200"/></svg>
<div class="t" style="left:1797px;top:374.500px;font-size:12px;color:#b4b4b4;">不透明度:</div>
<div class="box" style="left:1856px;top:373px;width:38px;height:17px;background:#2a2a2a;"></div>
<div class="t" style="left:1858px;top:376px;font-size:11.500px;color:#e8e8e8;">60%</div>
<div class="box" style="left:1894px;top:373px;width:17px;height:17px;background:#1f1f1f;"></div>
<svg class="abs" style="left:1899px;top:380px" width="8" height="5" viewBox="0 0 8 5"><path d="M0.500 0.500l3.500 3.500 3.500-3.500" fill="none" stroke="#c4c4c4" stroke-width="1.200"/></svg>
<!-- lock row -->
<div class="t" style="left:1645px;top:410px;font-size:12.500px;color:#9a9a9a;">锁定:</div>
<svg class="abs" style="left:1687px;top:410px" width="13" height="12" viewBox="0 0 13 12"><rect x="0.600" y="0.600" width="11.800" height="10.800" fill="#323232" stroke="#dcdcdc" stroke-width="1.200"/><g fill="#dcdcdc"><rect x="0.600" y="0.600" width="4" height="3.600"/><rect x="8.400" y="0.600" width="4" height="3.600"/><rect x="4.600" y="4.200" width="3.800" height="3.600"/><rect x="0.600" y="7.800" width="4" height="3.600"/><rect x="8.400" y="7.800" width="4" height="3.600"/></g></svg>
<svg class="abs" style="left:1714px;top:408px" width="16" height="16" viewBox="0 0 16 16"><path d="M15.500 0.500c-3.500 2-7 5.500-9 8.500l2 1.800c2.700-2.700 5.500-6.500 7-10.300z" fill="#dcdcdc"/><path d="M5.800 9.800c-2.300-0.600-4 0.800-4.200 2.700c-0.100 1.200-0.800 2-1.600 2.500c3.500 0.900 7 0 7.800-3.500z" fill="#dcdcdc"/></svg>
<svg class="abs" style="left:1741px;top:409px" width="14" height="14" viewBox="0 0 14 14"><path d="M7 0l2.500 3h-1.700v3.200h3.200V4.500l3 2.500-3 2.500V7.800H7.800V11h1.700L7 14l-2.500-3h1.700V7.800H3V9.500L0 7l3-2.500v1.700h3.200V3H4.500z" fill="#dcdcdc"/></svg>
<!-- layer list -->
<div class="box" style="left:1639px;top:436px;width:279px;height:612px;background:#2b2b2b;"></div>
<div class="box" style="left:1639px;top:436px;width:259px;height:310px;background:#323232;"></div>
<div class="box" style="left:1676px;top:547px;width:222px;height:39px;background:#4b4b4b;"></div>
<div class="box" style="left:1676px;top:436px;width:1px;height:310px;background:#2d2d2d;"></div>
<div class="rowline" style="top:466px"></div><div class="rowline" style="top:506px"></div><div class="rowline" style="top:546px"></div><div class="rowline" style="top:586px"></div><div class="rowline" style="top:626px"></div><div class="rowline" style="top:666px"></div><div class="rowline" style="top:706px"></div><div class="rowline" style="top:746px"></div>
<!-- visibility column -->
<div class="box" style="left:1650px;top:444px;width:15px;height:15px;border:1px solid #414141;"></div>
<div class="box" style="left:1650px;top:479px;width:15px;height:15px;border:1px solid #414141;"></div>
<svg class="eye" style="top:522px" viewBox="0 0 17 11"><path d="M0.300 5.500C2.500 1.800 5.300 0.300 8.500 0.300s6 1.500 8.200 5.200c-2.200 3.700-5 5.200-8.200 5.200S2.500 9.200 0.300 5.500z" fill="#dcdcdc"/><circle cx="8.500" cy="5.300" r="3.500" fill="#323232"/><circle cx="8.500" cy="5.300" r="1.700" fill="#dcdcdc"/><circle cx="9.400" cy="4.300" r="0.900" fill="#323232"/></svg>
<svg class="eye" style="top:562px" viewBox="0 0 17 11"><path d="M0.300 5.500C2.500 1.800 5.300 0.300 8.500 0.300s6 1.500 8.200 5.200c-2.200 3.700-5 5.200-8.200 5.200S2.500 9.200 0.300 5.500z" fill="#dcdcdc"/><circle cx="8.500" cy="5.300" r="3.500" fill="#323232"/><circle cx="8.500" cy="5.300" r="1.700" fill="#dcdcdc"/><circle cx="9.400" cy="4.300" r="0.900" fill="#323232"/></svg>
<svg class="eye" style="top:602px" viewBox="0 0 17 11"><path d="M0.300 5.500C2.500 1.800 5.300 0.300 8.500 0.300s6 1.500 8.200 5.200c-2.200 3.700-5 5.200-8.200 5.200S2.500 9.200 0.300 5.500z" fill="#dcdcdc"/><circle cx="8.500" cy="5.300" r="3.500" fill="#323232"/><circle cx="8.500" cy="5.300" r="1.700" fill="#dcdcdc"/><circle cx="9.400" cy="4.300" r="0.900" fill="#323232"/></svg>
<svg class="eye" style="top:642px" viewBox="0 0 17 11"><path d="M0.300 5.500C2.500 1.800 5.300 0.300 8.500 0.300s6 1.500 8.200 5.200c-2.200 3.700-5 5.200-8.200 5.200S2.500 9.200 0.300 5.500z" fill="#dcdcdc"/><circle cx="8.500" cy="5.300" r="3.500" fill="#323232"/><circle cx="8.500" cy="5.300" r="1.700" fill="#dcdcdc"/><circle cx="9.400" cy="4.300" r="0.900" fill="#323232"/></svg>
<svg class="eye" style="top:682px" viewBox="0 0 17 11"><path d="M0.300 5.500C2.500 1.800 5.300 0.300 8.500 0.300s6 1.500 8.200 5.200c-2.200 3.700-5 5.200-8.200 5.200S2.500 9.200 0.300 5.500z" fill="#dcdcdc"/><circle cx="8.500" cy="5.300" r="3.500" fill="#323232"/><circle cx="8.500" cy="5.300" r="1.700" fill="#dcdcdc"/><circle cx="9.400" cy="4.300" r="0.900" fill="#323232"/></svg>
<svg class="eye" style="top:722px" viewBox="0 0 17 11"><path d="M0.300 5.500C2.500 1.800 5.300 0.300 8.500 0.300s6 1.500 8.200 5.200c-2.200 3.700-5 5.200-8.200 5.200S2.500 9.200 0.300 5.500z" fill="#dcdcdc"/><circle cx="8.500" cy="5.300" r="3.500" fill="#323232"/><circle cx="8.500" cy="5.300" r="1.700" fill="#dcdcdc"/><circle cx="9.400" cy="4.300" r="0.900" fill="#323232"/></svg>
<!-- group row -->
<svg class="abs" style="left:1684px;top:445px" width="6" height="14" viewBox="0 0 6 14"><path d="M1 0.500l3.500 6.500L1 13.500" fill="none" stroke="#b8b8b8" stroke-width="1.200"/></svg>
<svg class="abs" style="left:1695px;top:444px" width="19" height="15" viewBox="0 0 19 15"><path d="M0.500 1.500q0-1 1-1h5.500l1.500 2h9q1 0 1 1v10q0 1-1 1h-16q-1 0-1-1z" fill="#dcdcdc"/><path d="M0.500 3.300h8" stroke="#323232" stroke-width="0.800"/></svg>
<div class="t ltxt" style="left:1729px;top:447px;font-size:12.500px;">组 1</div>
<!-- 效果 -->
<svg class="abs" style="left:1682px;top:473px" width="39" height="28" viewBox="0 0 39 28"><rect x="0.500" y="0.500" width="38" height="27" fill="#b4f4f2" stroke="#5a7476" stroke-width="1"/><path d="M1 1h14.500c1.500 8 2 17 3.500 26H1z" fill="#f6e4df"/><path d="M5.200 8c1-2 4-2 4.600 0.500l0.400 8-0.900 8.500h-2.800l-0.600-9z" fill="#33262a"/><path d="M6.500 4.500c1-2 4-1.800 4.500 0.500c-0.600 2-3.300 2.500-4.500-0.500z" fill="#b98a72"/><path d="M10 7c2-1.500 4.500 0 5 3l3 16.500h-8.500l0.800-10z" fill="#fbf1ee"/><path d="M10.800 5.200c1-1.600 3.200-1.300 3.500 0.500c-0.500 1.400-2.300 1.800-3.500-0.500z" fill="#dcae94"/><path d="M23.500 6.500c1.500-1.600 6-1.800 7.800-0.200l-0.900 3.700h-5.700z" fill="#22160f"/><path d="M25.300 9.600c2-0.800 4.200-0.500 5.200 0.600l3.200 11.500h-10z" fill="#f6e9e7"/><path d="M26 9.800c1.300-0.600 2.600-0.200 3 1l-0.800 3h-2z" fill="#e6c6a6"/></svg>
<div class="t ltxt" style="top:482px;font-size:12.500px;">效果</div>
<!-- copy layers -->
<div class="thumb chk" style="top:513px;"></div>
<div class="t ltxt" style="top:522px;font-size:12.500px;">矩形 3 拷贝 4</div>
<div class="box" style="left:1679px;top:550px;width:45px;height:34px;background:#5a5a5a;"></div>
<svg class="abs" style="left:1679px;top:550px" width="45" height="34" viewBox="0 0 45 34"><path d="M0.500 11.500V0.500H15M30 0.500H44.500V11.500M44.500 22.500V33.500H30M15 33.500H0.500V22.500" fill="none" stroke="#f4f4f4" stroke-width="1"/></svg>
<div class="thumb chk" style="top:553px;border-color:#5a5a5a;"></div>
<div class="t ltxt" style="top:562px;font-size:12.500px;">矩形 3 拷贝 3</div>
<div class="thumb chk" style="top:593px;"></div>
<div class="t ltxt" style="top:602px;font-size:12.500px;">矩形 3 拷贝 2</div>
<div class="thumb chk" style="top:633px;"></div>
<div class="t ltxt" style="top:642px;font-size:12.500px;">矩形 3 拷贝</div>
<!-- 矩形 3 -->
<div class="thumb chk" style="top:673px;"></div>
<svg class="abs" style="left:1682px;top:673px" width="39" height="28" viewBox="0 0 39 28"><path d="M2.500 1h14.500c-1 4 1.500 9 2 14c0.500 4 0 8 0.500 12H3.500c0.500-5-1-9-0.500-14c0.500-4-1-8-0.500-12z" fill="#ee5df9"/><rect x="21" y="10" width="17.500" height="17.500" fill="#2e2e2e"/><rect x="25" y="14" width="10" height="10" fill="none" stroke="#c8c8c8" stroke-width="1.300"/><g fill="#2e2e2e" stroke="#c8c8c8" stroke-width="1"><rect x="23.500" y="12.500" width="3" height="3"/><rect x="33.500" y="12.500" width="3" height="3"/><rect x="23.500" y="22.500" width="3" height="3"/><rect x="33.500" y="22.500" width="3" height="3"/></g></svg>
<div class="t ltxt" style="top:682px;font-size:12.500px;">矩形 3</div>
<!-- 背景 -->
<div class="thumb" style="top:713px;background:#b3f9f6;"></div>
<div class="t ltxt" style="top:722px;font-size:12.500px;">背景</div>
<svg class="abs" style="left:1866px;top:720px" width="12" height="15" viewBox="0 0 12 15"><path d="M3 6.500V4a3 3 0 0 1 6 0v2.500" fill="none" stroke="#d0d0d0" stroke-width="1.400"/><rect x="0.700" y="6.700" width="10.600" height="7.600" fill="none" stroke="#d0d0d0" stroke-width="1.400"/><rect x="5" y="9.500" width="2" height="2.500" fill="#d0d0d0"/></svg>
<!-- bottom bar -->
<div class="box" style="left:1639px;top:1048px;width:279px;height:30px;background:#323232;"></div>
<svg class="abs" style="left:1688px;top:1056px" width="19" height="12" viewBox="0 0 19 12"><g fill="none" stroke="#8a8a8a" stroke-width="1.600"><path d="M8 2.200H5.500a3.800 3.800 0 0 0 0 7.600H8M11 2.200h2.500a3.800 3.800 0 0 1 0 7.600H11M5.500 6h8"/></g></svg>
<div class="t" style="left:1720px;top:1053px;font-size:18px;font-style:italic;color:#d6d6d6;letter-spacing:-0.500px;">fx</div>
<div class="box" style="left:1733px;top:1069px;width:0;height:0;border-left:2.500px solid transparent;border-right:2.500px solid transparent;border-top:3px solid #e0e0e0;"></div>
<svg class="abs" style="left:1751px;top:1056px" width="16" height="12" viewBox="0 0 16 12"><rect x="0" y="0" width="16" height="11.500" rx="0.800" fill="#d8d8d8"/><circle cx="8" cy="5.700" r="3.300" fill="#323232"/></svg>
<svg class="abs" style="left:1782px;top:1055px" width="14" height="14" viewBox="0 0 14 14"><circle cx="7" cy="7" r="6" fill="none" stroke="#d8d8d8" stroke-width="1.400"/><path d="M11.300 2.700A6 6 0 0 1 2.700 11.300z" fill="#d8d8d8"/></svg>
<div class="box" style="left:1794px;top:1069px;width:0;height:0;border-left:2.500px solid transparent;border-right:2.500px solid transparent;border-top:3px solid #e0e0e0;"></div>
<svg class="abs" style="left:1811px;top:1055.500px" width="15" height="13" viewBox="0 0 15 13"><path d="M0 1.300q0-0.800 0.800-0.800h4.700l1.300 1.700h7.400q0.800 0 0.800 0.800v8.700q0 0.800-0.800 0.800h-13.400q-0.800 0-0.800-0.800z" fill="#d8d8d8"/><path d="M0.300 2.600h6.500" stroke="#323232" stroke-width="0.600"/></svg>
<svg class="abs" style="left:1843px;top:1056px" width="13" height="12" viewBox="0 0 13 12"><path d="M0.700 0.700h11.600v10.600H5.500L0.700 6.800z" fill="#262626" stroke="#d8d8d8" stroke-width="1.400" stroke-linejoin="round"/><path d="M0.700 6.800H5.500v4.500z" fill="#d8d8d8"/></svg>
<svg class="abs" style="left:1873px;top:1055px" width="13" height="14" viewBox="0 0 13 14"><path d="M0 2.800h13M4.200 2.500V0.700h4.600v1.800" fill="none" stroke="#d8d8d8" stroke-width="1.400"/><path d="M1.600 3.500v9.200q0 0.600 0.600 0.600h8.600q0.600 0 0.600-0.600V3.500" fill="none" stroke="#d8d8d8" stroke-width="1.400"/><path d="M4.300 5v6.500M6.500 5v6.500M8.700 5v6.500" stroke="#d8d8d8" stroke-width="1.100"/></svg>
<!-- opacity slider popup + cursor -->
<div class="box" style="left:1768px;top:392px;width:150px;height:33px;background:#333333;border:1px solid #272727;box-shadow:0 1px 3px rgba(0,0,0,0.35);"></div>
<div class="box" style="left:1779px;top:405px;width:129px;height:3px;background:#565656;"></div>
<svg class="abs" style="left:1848px;top:402px" width="13" height="13" viewBox="0 0 13 13"><path d="M6.500 0.300L12.500 6v5q0 1.500-1.500 1.500h-9q-1.500 0-1.500-1.500V6z" fill="#e4e4e4"/></svg>
<svg class="abs" style="left:1847px;top:412px" width="14" height="20" viewBox="0 0 14 20"><path d="M1.500 1.500v14.500l3.500-3.200 2.600 6 2.600-1.100-2.600-5.900h4.800z" fill="#ffffff" stroke="#111" stroke-width="1.100" stroke-linejoin="round"/></svg>
</body>
</html>
